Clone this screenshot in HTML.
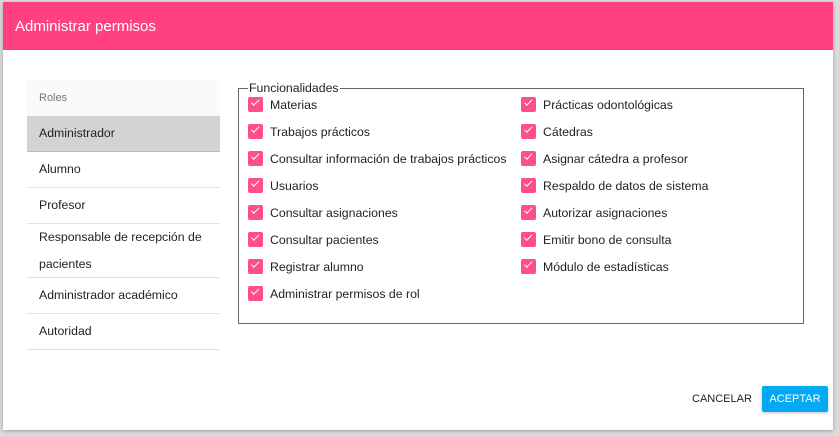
<!DOCTYPE html>
<html><head><meta charset="utf-8"><style>
body{margin:0;width:839px;height:436px;background:#dcdcdc;font-family:"Liberation Sans",sans-serif;position:relative;overflow:hidden}
.dlg{position:absolute;left:3px;top:2px;width:830px;height:428px;background:#fff;box-shadow:0 1px 4px rgba(0,0,0,.3)}
.hd{height:48px;background:#ff4081;color:#fff;font-size:15px;line-height:50px;padding-left:12px}
.list{position:absolute;left:24px;top:78px;width:193px}
.it{border-bottom:1px solid #e0e0e0;font-size:12.3px;color:#222;padding-left:12px;height:35px;line-height:35px}
.fs{position:absolute;left:235px;top:86px;width:564px;height:234px;border:1px solid #666}
.lg{position:absolute;left:9px;top:-8px;background:#fff;font-size:12.3px;color:#222;padding:0 1px;line-height:14px}
.cb{position:absolute;font-size:12.3px;color:#222;line-height:16px;white-space:nowrap}
.cb i{position:absolute;left:-22px;top:0;width:15px;height:15px;background:#ff4f8b;border-radius:2px}
.cb i:after{content:"";position:absolute;top:6px;left:3px;width:7px;height:3px;border-left:1px solid #fff;border-bottom:1px solid #fff;transform:rotate(-45deg);transform-origin:left top}
</style></head><body>
<div class="dlg">
<div class="hd">Administrar permisos</div>
<div class="list">
<div class="it" style="background:#fafafa;color:#777;font-size:11px;border:0;height:36px;line-height:36px">Roles</div>
<div class="it" style="background:#d3d3d3;border-bottom:1px solid #bbb">Administrador</div>
<div class="it">Alumno</div>
<div class="it">Profesor</div>
<div class="it" style="height:53px;line-height:27px">Responsable de recepción de pacientes</div>
<div class="it">Administrador académico</div>
<div class="it">Autoridad</div>
</div>
<div class="fs"><div class="lg">Funcionalidades</div></div>
<div style="position:absolute;left:267px;top:95px">
<div class="cb" style="top:0"><i></i>Materias</div>
<div class="cb" style="top:27px"><i></i>Trabajos prácticos</div>
<div class="cb" style="top:54px"><i></i>Consultar información de trabajos prácticos</div>
<div class="cb" style="top:81px"><i></i>Usuarios</div>
<div class="cb" style="top:108px"><i></i>Consultar asignaciones</div>
<div class="cb" style="top:135px"><i></i>Consultar pacientes</div>
<div class="cb" style="top:162px"><i></i>Registrar alumno</div>
<div class="cb" style="top:189px"><i></i>Administrar permisos de rol</div>
</div>
<div style="position:absolute;left:540px;top:95px">
<div class="cb" style="top:0"><i></i>Prácticas odontológicas</div>
<div class="cb" style="top:27px"><i></i>Cátedras</div>
<div class="cb" style="top:54px"><i></i>Asignar cátedra a profesor</div>
<div class="cb" style="top:81px"><i></i>Respaldo de datos de sistema</div>
<div class="cb" style="top:108px"><i></i>Autorizar asignaciones</div>
<div class="cb" style="top:135px"><i></i>Emitir bono de consulta</div>
<div class="cb" style="top:162px"><i></i>Módulo de estadísticas</div>
</div>
<div style="position:absolute;left:689px;top:391px;font-size:11px;color:#222">CANCELAR</div>
<div style="position:absolute;left:759px;top:384px;width:66px;height:26px;background:#03a9f4;border-radius:2px;color:#fff;font-size:11px;line-height:27px;text-align:center;box-shadow:0 1px 3px rgba(0,0,0,.25)">ACEPTAR</div>
</div>
</body></html>
